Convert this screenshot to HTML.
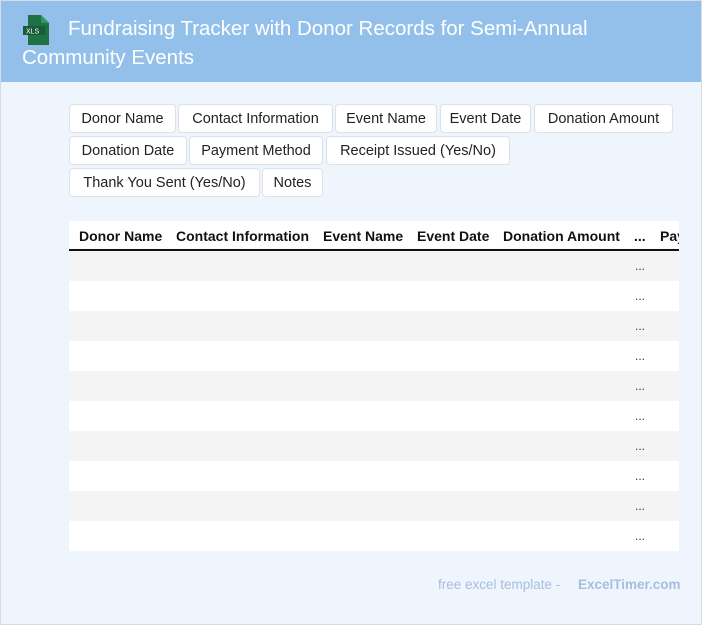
<!DOCTYPE html>
<html><head><style>
body{margin:0;width:702px;height:625px;overflow:hidden;font-family:"Liberation Sans",Arial,sans-serif}
.page{position:absolute;left:0;top:0;width:700px;height:623px;border:1px solid #d6dce4;background:#eef5fd}
.hdr{position:absolute;left:0;top:0;width:700px;height:81px;background:#92c0ea}
.ttl{position:absolute;left:21px;top:13px;width:660px;color:#fff;font-size:20.5px;line-height:29px;text-indent:46px}
.ico{position:absolute;left:22px;top:14px}
.tag{position:absolute;height:29px;line-height:28px;text-align:center;background:#fff;border:1px solid #dde2e8;border-radius:4px;font-size:14.5px;color:#222;box-sizing:border-box;white-space:nowrap}
.tbl{position:absolute;left:68px;top:220px;width:610px;height:330px;overflow:hidden;background:#fff}
.th{position:absolute;top:0;height:30px;border-bottom:2px solid #111;width:700px;box-sizing:border-box}
.th span{position:absolute;top:7px;font-weight:bold;font-size:14px;color:#111;white-space:nowrap}
.row{position:absolute;left:0;width:610px;height:30px}
.row span{position:absolute;left:566px;top:8px;font-size:12px;color:#333}
.ft{position:absolute;top:576px;font-size:13.5px;color:#a9bde0}
</style></head><body><div class="page">
<div class="hdr"></div>
<svg class="ico" width="28" height="30" viewBox="0 0 28 30"><path d="M5 0h13l8 8v22H5z" fill="#1e7145"/><path d="M18 0l8 8h-8z" fill="#2d9a5e"/><rect x="0" y="11" width="22" height="9" fill="#185c37"/><text x="3" y="18.5" font-size="7" fill="#fff" font-family="Liberation Sans">XLS</text></svg>
<div class="ttl">Fundraising Tracker with Donor Records for Semi-Annual Community Events</div>
<div class="tag" style="left:68px;top:103px;width:107px">Donor Name</div>
<div class="tag" style="left:177px;top:103px;width:155px">Contact Information</div>
<div class="tag" style="left:334px;top:103px;width:102px">Event Name</div>
<div class="tag" style="left:439px;top:103px;width:91px">Event Date</div>
<div class="tag" style="left:533px;top:103px;width:139px">Donation Amount</div>
<div class="tag" style="left:68px;top:135px;width:118px">Donation Date</div>
<div class="tag" style="left:188px;top:135px;width:134px">Payment Method</div>
<div class="tag" style="left:325px;top:135px;width:184px">Receipt Issued (Yes/No)</div>
<div class="tag" style="left:68px;top:167px;width:191px">Thank You Sent (Yes/No)</div>
<div class="tag" style="left:261px;top:167px;width:61px">Notes</div>
<div class="tbl">
<div class="th"><span style="left:10px">Donor Name</span><span style="left:107px">Contact Information</span><span style="left:254px">Event Name</span><span style="left:348px">Event Date</span><span style="left:434px">Donation Amount</span><span style="left:565px">...</span><span style="left:591px">Payment</span></div>
<div class="row" style="top:30px;background:#f4f4f4"><span>...</span></div>
<div class="row" style="top:60px"><span>...</span></div>
<div class="row" style="top:90px;background:#f4f4f4"><span>...</span></div>
<div class="row" style="top:120px"><span>...</span></div>
<div class="row" style="top:150px;background:#f4f4f4"><span>...</span></div>
<div class="row" style="top:180px"><span>...</span></div>
<div class="row" style="top:210px;background:#f4f4f4"><span>...</span></div>
<div class="row" style="top:240px"><span>...</span></div>
<div class="row" style="top:270px;background:#f4f4f4"><span>...</span></div>
<div class="row" style="top:300px"><span>...</span></div>
</div>
<div class="ft" style="left:437px">free excel template -</div>
<div class="ft" style="left:577px;font-weight:bold">ExcelTimer.com</div>
</div></body></html>
